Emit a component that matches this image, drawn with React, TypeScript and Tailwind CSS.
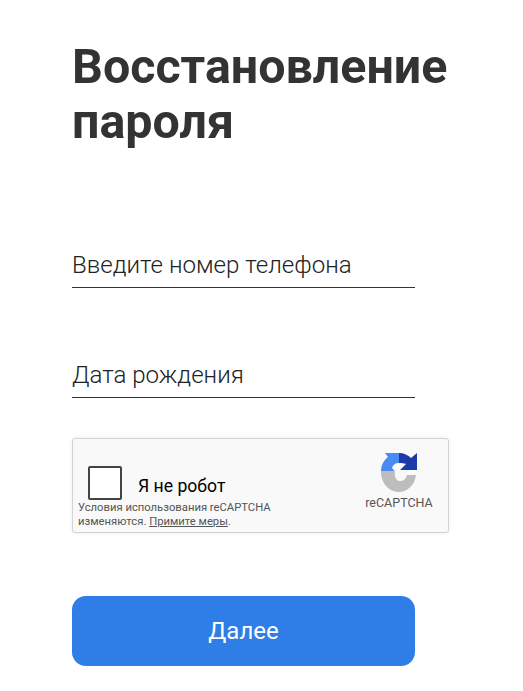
export default function App() {
  return (
    <div className="min-h-[691px] bg-white pl-[72px] pt-[39px] font-['Roboto',sans-serif] text-[#333]">
      <h1 className="w-[420px] text-[48.4px] font-bold leading-[55px]">Восстановление пароля</h1>

      <div className="mt-[100px] w-[343px] border-b border-[#333] pb-[6px] text-[24.1px] font-light leading-[32px] text-[#222]">
        Введите номер телефона
      </div>
      <div className="mt-[71px] w-[343px] border-b border-[#333] pb-[6px] text-[24.1px] font-light leading-[32px] text-[#222]">
        Дата рождения
      </div>

      <div className="mt-[40px] flex h-[95px] w-[377px] justify-between rounded-[3px] border border-[#d3d3d3] bg-[#f9f9f9] shadow-[0_0_4px_rgba(0,0,0,0.08)]">
        <div className="flex flex-col pl-[5px] pt-[27px]">
          <div className="flex items-center pl-[10px]">
            <div className="h-[34px] w-[34px] rounded-[2px] border-2 border-[#444] bg-white" />
            <span className="ml-[16px] mt-[6px] text-[17.6px] leading-[24px] text-black">Я не робот</span>
          </div>
          <div className="mt-[1px] text-[11.25px] leading-[14px] text-[#555]">
            <div>Условия использования reCAPTCHA</div>
            <div>
              изменяются. <span className="underline">Примите меры</span>.
            </div>
          </div>
        </div>
        <div className="flex w-[100px] flex-col items-center pl-[2px] pt-[13px]">
          <svg className="ml-[2px]" width="40" height="42" viewBox="5 4 40 42">
            <path d="M10 5 H24 V15 C20 15 18 17 17 20 L20 23.5 H6 C6 17 9 12 13 9 Z" fill="#4a8af4" />
            <path d="M24 5 C29 5 33 7 36 10 L42 5 V22 H25 L31 16 C29 15 27 15 24 15 Z" fill="#1c3aa9" />
            <path d="M6 24 H20 C19 28 21 33 25 33 C28 33 31 31 32 27 H41 C40 37 32 44 24 44 C14 44 6 35 6 24 Z" fill="#bdbdbd" />
          </svg>
          <span className="mt-[2px] text-[12.5px] leading-[14px] text-[#555]">reCAPTCHA</span>
        </div>
      </div>

      <button className="mt-[63px] block h-[70px] w-[343px] rounded-[14px] bg-[#2f7de6] text-[24px] text-white">
        Далее
      </button>
    </div>
  );
}
